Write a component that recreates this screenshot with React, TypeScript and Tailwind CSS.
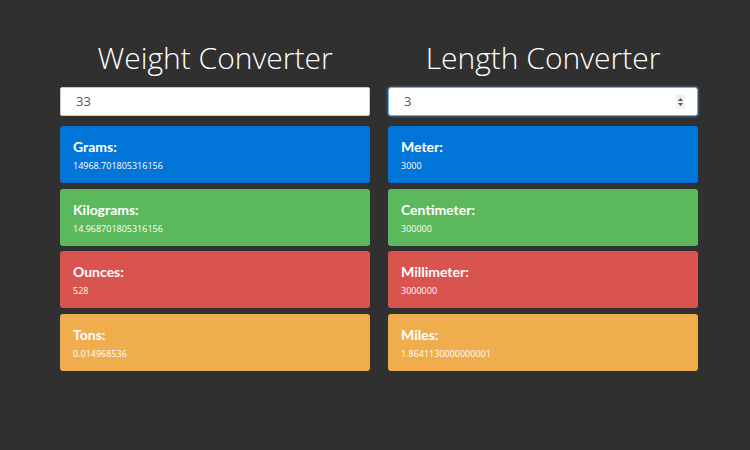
const weightRows = [
  { label: 'Grams:', value: '14968.701805316156', color: 'bg-[#0275d8]' },
  { label: 'Kilograms:', value: '14.968701805316156', color: 'bg-[#5cb85c]' },
  { label: 'Ounces:', value: '528', color: 'bg-[#d9534f]' },
  { label: 'Tons:', value: '0.014968536', color: 'bg-[#f0ad4e]' },
]

const lengthRows = [
  { label: 'Meter:', value: '3000', color: 'bg-[#0275d8]' },
  { label: 'Centimeter:', value: '300000', color: 'bg-[#5cb85c]' },
  { label: 'Millimeter:', value: '3000000', color: 'bg-[#d9534f]' },
  { label: 'Miles:', value: '1.8641130000000001', color: 'bg-[#f0ad4e]' },
]

type Row = { label: string; value: string; color: string }

function Converter({ title, value, rows, focused }: { title: string; value: string; rows: Row[]; focused?: boolean }) {
  return (
    <div className="w-[310px] flex flex-col">
      <h1 className="text-center text-white text-[30px] font-light leading-[40px] h-[40px] mb-[9px] font-['Open_Sans',sans-serif]">{title}</h1>
      <div
        className={
          focused
            ? 'h-[29px] bg-white rounded-[3px] border border-[#66afe9] shadow-[0_0_3px_rgba(102,175,233,0.7)] flex items-center pl-[15px] pr-[12px]'
            : 'h-[29px] bg-white rounded-[2px] border border-[#ccc] flex items-center pl-[15px] pr-[12px]'
        }
      >
        <span className="flex-1 text-[13px] text-[#555] font-['Open_Sans',sans-serif]">{value}</span>
        {focused && (
          <span className="w-[9px] h-[14px] bg-[#f0f0f0] flex flex-col items-center justify-center gap-[2px]">
            <svg width="5" height="3" viewBox="0 0 5 3"><path d="M0 3L2.5 0L5 3Z" fill="#555" /></svg>
            <svg width="5" height="3" viewBox="0 0 5 3"><path d="M0 0L2.5 3L5 0Z" fill="#555" /></svg>
          </span>
        )}
      </div>
      <div className="flex flex-col gap-[5.5px] mt-[10px]">
        {rows.map(r => (
          <div key={r.label} className={`${r.color} h-[57px] rounded-[3px] px-[13px] pt-[11px] text-white`}>
            <div className="text-[14px] font-bold leading-[20px] font-['Lato',sans-serif]">{r.label}</div>
            <div className="text-[9px] leading-[12px] mt-[3px] font-['Open_Sans',sans-serif]">{r.value}</div>
          </div>
        ))}
      </div>
    </div>
  )
}

export default function App() {
  return (
    <div className="w-[750px] h-[450px] bg-[#303030] flex gap-[18px] pl-[60px] pt-[38px]">
      <Converter title="Weight Converter" value="33" rows={weightRows} />
      <Converter title="Length Converter" value="3" rows={lengthRows} focused />
    </div>
  )
}
